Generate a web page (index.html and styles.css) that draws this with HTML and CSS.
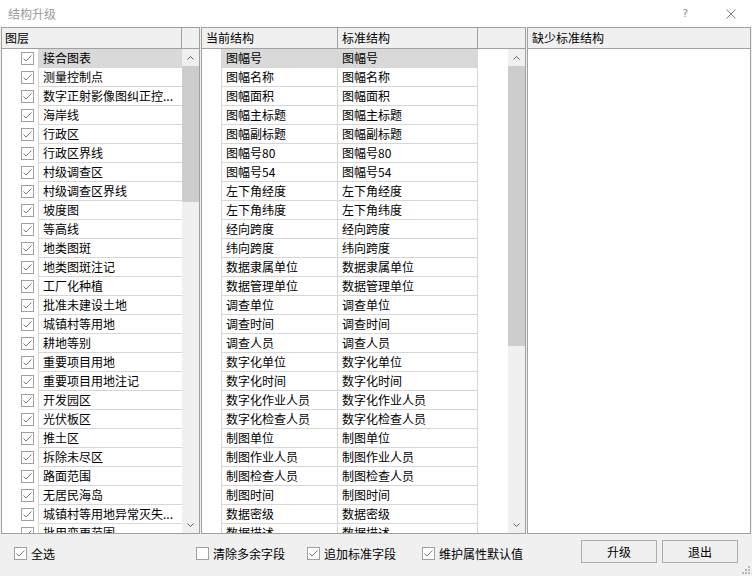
FILE: index.html
```html
<!DOCTYPE html>
<html lang="zh-CN">
<head>
  <meta charset="UTF-8">
  <title>结构升级</title>
  <link rel="stylesheet" href="styles.css">
</head>
<body>

  <!-- Title bar -->
  <div class="titlebar">
    <span class="title">结构升级</span>
    <span class="help">?</span>
    <svg class="close" width="10" height="10" viewBox="0 0 10 10">
      <path d="M0.5 0.5 L9.5 9.5 M9.5 0.5 L0.5 9.5" stroke="#808080" stroke-width="1"/>
    </svg>
  </div>

  <div class="main">
    <!-- Layers -->
    <div class="panel layers">
      <div class="head">
        <div class="hcell layer-col">图层</div>
        <div class="hcell blank"></div>
      </div>
      <div class="body">
        <div class="rows" id="layerRows"></div>
        <div class="scrollbar">
          <div class="arrow"><svg width="7" height="4" viewBox="0 0 7 4"><polyline points="0.5,3.5 3.5,0.5 6.5,3.5" fill="none" stroke="#606060"/></svg></div>
          <div class="thumb"></div>
          <div class="track"></div>
          <div class="arrow"><svg width="7" height="4" viewBox="0 0 7 4"><polyline points="0.5,0.5 3.5,3.5 6.5,0.5" fill="none" stroke="#606060"/></svg></div>
        </div>
      </div>
    </div>

    <!-- Current / standard fields -->
    <div class="panel fields">
      <div class="head">
        <div class="hcell cur-col">当前结构</div>
        <div class="hcell std-col">标准结构</div>
        <div class="hcell blank"></div>
      </div>
      <div class="body">
        <div class="rows" id="fieldRows"></div>
        <div class="filler"></div>
        <div class="scrollbar">
          <div class="arrow"><svg width="7" height="4" viewBox="0 0 7 4"><polyline points="0.5,3.5 3.5,0.5 6.5,3.5" fill="none" stroke="#606060"/></svg></div>
          <div class="thumb"></div>
          <div class="track"></div>
          <div class="arrow"><svg width="7" height="4" viewBox="0 0 7 4"><polyline points="0.5,0.5 3.5,3.5 6.5,0.5" fill="none" stroke="#606060"/></svg></div>
        </div>
      </div>
    </div>

    <!-- Missing fields -->
    <div class="panel missing">
      <div class="head">
        <div class="hcell missing-col">缺少标准结构</div>
      </div>
      <div class="body"></div>
    </div>
  </div>

  <div class="footer">
    <label class="opt opt-all">
      <svg class="check" width="13" height="13" viewBox="0 0 13 13"><rect x="0.5" y="0.5" width="12" height="12" fill="#fff" stroke="#a0a0a0"/><polyline points="2.5,6.5 5,9 10.5,3.5" fill="none" stroke="#7a7a7a"/></svg>
      全选
    </label>
    <label class="opt opt-clear">
      <svg class="check" width="13" height="13" viewBox="0 0 13 13"><rect x="0.5" y="0.5" width="12" height="12" fill="#fff" stroke="#a0a0a0"/></svg>
      清除多余字段
    </label>
    <label class="opt opt-add">
      <svg class="check" width="13" height="13" viewBox="0 0 13 13"><rect x="0.5" y="0.5" width="12" height="12" fill="#fff" stroke="#a0a0a0"/><polyline points="2.5,6.5 5,9 10.5,3.5" fill="none" stroke="#7a7a7a"/></svg>
      追加标准字段
    </label>
    <label class="opt">
      <svg class="check" width="13" height="13" viewBox="0 0 13 13"><rect x="0.5" y="0.5" width="12" height="12" fill="#fff" stroke="#a0a0a0"/><polyline points="2.5,6.5 5,9 10.5,3.5" fill="none" stroke="#7a7a7a"/></svg>
      维护属性默认值
    </label>

    <div class="buttons">
      <button class="btn">升级</button>
      <button class="btn">退出</button>
    </div>

    <svg class="grip" width="9" height="9" viewBox="0 0 9 9" fill="#b8b8b8">
      <rect x="7" y="1" width="2" height="2"/>
      <rect x="4" y="4" width="2" height="2"/><rect x="7" y="4" width="2" height="2"/>
      <rect x="1" y="7" width="2" height="2"/><rect x="4" y="7" width="2" height="2"/><rect x="7" y="7" width="2" height="2"/>
    </svg>
  </div>

  <script>
    const checkSvg = '<svg class="check" width="13" height="13" viewBox="0 0 13 13"><rect x="0.5" y="0.5" width="12" height="12" fill="#fff" stroke="#a0a0a0"/><polyline points="2.5,6.5 5,9 10.5,3.5" fill="none" stroke="#7a7a7a"/></svg>';

    const layers = [
      "接合图表", "测量控制点", "数字正射影像图纠正控...", "海岸线", "行政区",
      "行政区界线", "村级调查区", "村级调查区界线", "坡度图", "等高线",
      "地类图斑", "地类图斑注记", "工厂化种植", "批准未建设土地", "城镇村等用地",
      "耕地等别", "重要项目用地", "重要项目用地注记", "开发园区", "光伏板区",
      "推土区", "拆除未尽区", "路面范围", "无居民海岛", "城镇村等用地异常灭失...",
      "批用变更范围"
    ];

    const fields = [
      "图幅号", "图幅名称", "图幅面积", "图幅主标题", "图幅副标题",
      "图幅号80", "图幅号54", "左下角经度", "左下角纬度", "经向跨度",
      "纬向跨度", "数据隶属单位", "数据管理单位", "调查单位", "调查时间",
      "调查人员", "数字化单位", "数字化时间", "数字化作业人员", "数字化检查人员",
      "制图单位", "制图作业人员", "制图检查人员", "制图时间", "数据密级",
      "数据描述"
    ];

    let html = "";
    layers.forEach(function (name, i) {
      html += '<div class="row' + (i === 0 ? ' selected' : '') + '">' +
        '<div class="lead">' + checkSvg + '</div>' +
        '<div class="cell name">' + name + '</div></div>';
    });
    document.getElementById("layerRows").innerHTML = html;

    html = "";
    fields.forEach(function (name, i) {
      html += '<div class="row' + (i === 0 ? ' selected' : '') + '">' +
        '<div class="lead"></div>' +
        '<div class="cell cur">' + name + '</div>' +
        '<div class="cell std">' + name + '</div></div>';
    });
    document.getElementById("fieldRows").innerHTML = html;
  </script>

</body>
</html>
```

FILE: styles.css
```css
* {
  margin: 0;
  padding: 0;
  box-sizing: border-box;
}

body {
  width: 752px;
  height: 576px;
  overflow: hidden;
  background: #f0f0f0;
  font-family: "Noto Sans CJK SC", "Microsoft YaHei", sans-serif;
  font-size: 12px;
  color: #000;
  display: flex;
  flex-direction: column;
}

/* title bar */
.titlebar {
  height: 27px;
  flex: none;
  background: #fff;
  display: flex;
  align-items: center;
  padding: 0 16px 0 8px;
}

.title {
  flex: 1;
  color: #9a9a9a;
}

.help {
  color: #8a8a8a;
  font-family: "DejaVu Sans", sans-serif;
  font-size: 11px;
  margin-right: 38px;
}

.close {
  display: block;
}

/* panels */
.main {
  height: 507px;
  flex: none;
  display: flex;
  gap: 1px;
  padding: 0 1px;
}

.panel {
  background: #fff;
  border: 1px solid #a0a0a0;
  display: flex;
  flex-direction: column;
  overflow: hidden;
}

.layers { width: 199px; }
.fields { width: 325px; }
.missing { flex: 1; }

.head {
  height: 21px;
  flex: none;
  display: flex;
  background: #f0f0f0;
  border-bottom: 1px solid #a0a0a0;
}

.hcell {
  line-height: 20px;
  padding-left: 4px;
  border-right: 1px solid #a0a0a0;
  white-space: nowrap;
}

.hcell.blank {
  flex: 1;
  border-right: none;
}

.layer-col { width: 180px; padding-left: 3px; }
.cur-col { width: 136px; }
.std-col { width: 140px; }
.missing-col { flex: 1; border-right: none; }

.body {
  flex: 1;
  display: flex;
  overflow: hidden;
}

.rows {
  display: flex;
  flex-direction: column;
}

.row {
  display: flex;
  height: 19px;
  flex: none;
}

.lead {
  display: flex;
  align-items: center;
  height: 19px;
}

.layers .lead {
  width: 36px;
  padding-left: 19px;
}

.fields .lead {
  width: 19px;
}

.cell {
  height: 19px;
  line-height: 18px;
  padding-left: 4px;
  border-bottom: 1px solid #d6d6d6;
  white-space: nowrap;
  overflow: hidden;
}

.cell.name {
  width: 144px;
  border-left: 1px solid #d6d6d6;
}

.cell.cur {
  width: 117px;
  border-left: 1px solid #d6d6d6;
  border-right: 1px solid #d6d6d6;
}

.cell.std {
  width: 140px;
  border-right: 1px solid #d6d6d6;
}

.row.selected .cell {
  background: #d9d9d9;
}

.filler {
  width: 30px;
}

.check {
  display: block;
  flex: none;
}

/* scrollbars */
.scrollbar {
  width: 17px;
  flex: none;
  background: #f0f0f0;
  display: flex;
  flex-direction: column;
}

.arrow {
  height: 17px;
  flex: none;
  display: flex;
  align-items: center;
  justify-content: center;
}

.thumb {
  flex: none;
  background: #cdcdcd;
}

.layers .thumb { height: 136px; }
.fields .thumb { height: 280px; }

.track {
  flex: 1;
}

/* footer */
.footer {
  position: relative;
  flex: 1;
  display: flex;
  align-items: flex-start;
  padding: 6px 14px 0 14px;
}

.opt {
  margin-top: 6px;
  height: 14px;
  display: flex;
  align-items: center;
  gap: 4px;
  white-space: nowrap;
}

.opt-all { margin-right: 141px; }
.opt-clear { margin-right: 22px; }
.opt-add { margin-right: 26px; }

.buttons {
  margin-left: auto;
  display: flex;
  gap: 5px;
}

.btn {
  width: 76px;
  height: 23px;
  background: #f0f0f0;
  border: 1px solid #adadad;
  font-family: inherit;
  font-size: 12px;
  color: #000;
}

.grip {
  position: absolute;
  right: 2px;
  bottom: 2px;
}
```
